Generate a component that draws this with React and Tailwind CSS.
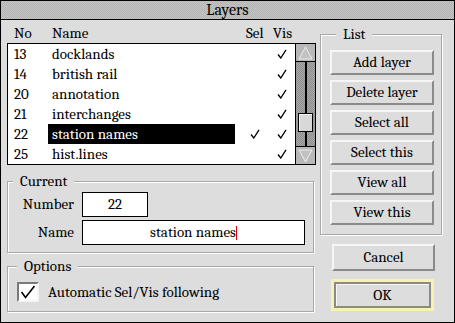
import React from 'react';

const rows = [
  { no: '13', name: 'docklands', sel: false, vis: true },
  { no: '14', name: 'british rail', sel: false, vis: true },
  { no: '20', name: 'annotation', sel: false, vis: true },
  { no: '21', name: 'interchanges', sel: false, vis: true },
  { no: '22', name: 'station names', sel: true, vis: true, current: true },
  { no: '25', name: 'hist.lines', sel: false, vis: true },
];

const buttons = ['Add layer', 'Delete layer', 'Select all', 'Select this', 'View all', 'View this'];

// etched group box, like the RISC OS ones
const groove = 'border border-[#a8a8a8] shadow-[inset_1px_1px_0_#fff,1px_1px_0_#fff]';

function Tick() {
  return (
    <svg width="10" height="10" viewBox="0 0 10 10" className="block">
      <path d="M1 5.5 L3.8 9 L9 0.8" fill="none" stroke="#000" strokeWidth="1.3" />
    </svg>
  );
}

function Arrow({ down }) {
  return (
    <svg width="17" height="16" viewBox="0 0 17 16" className="block mx-auto">
      <polygon
        points={down ? '2,2 15,2 8.5,14' : '2,14 15,14 8.5,2'}
        fill="#c2c2c2"
        stroke="#ececec"
        strokeWidth="1"
      />
    </svg>
  );
}

function ActionButton({ label }) {
  return (
    <div className="h-[25px] flex items-center justify-center bg-[#dddddd] border-2 border-t-[#f6f6f6] border-l-[#f6f6f6] border-b-[#8a8a8a] border-r-[#8a8a8a]">
      {label}
    </div>
  );
}

export default function App() {
  return (
    <div className="font-serif w-[455px] h-[323px] bg-[#dddddd] border border-black flex flex-col text-[15px] leading-[17px] text-black">
      {/* Title bar */}
      <div className="h-[19px] shrink-0 border-b border-black flex items-center justify-center text-[16px] bg-[repeating-conic-gradient(#c6c6c6_0_25%,#b2b2b2_0_50%)] bg-[length:2px_2px]">
        Layers
      </div>

      <div className="flex flex-1">
        {/* Left column */}
        <div className="w-[319px] pl-[6px] flex flex-col">
          <div className="h-[23px] w-[309px] flex items-end pb-[1px]">
            <span className="w-[45px] pl-[7px]">No</span>
            <span className="w-[194px]">Name</span>
            <span className="w-[27px]">Sel</span>
            <span>Vis</span>
          </div>

          <div className="w-[309px] h-[122px] border border-black flex">
            <div className="flex-1 bg-white overflow-hidden">
              {rows.map((r) => (
                <div key={r.no} className="h-[20px] flex items-center">
                  <span className="w-[40px] pl-[6px]">{r.no}</span>
                  <span
                    className={
                      'w-[187px] h-[20px] pl-[4px] flex items-center ' +
                      (r.current ? 'bg-black text-white' : '')
                    }
                  >
                    {r.name}
                  </span>
                  <span className="w-[27px] pl-[15px]">{r.sel && <Tick />}</span>
                  <span className="pl-[15px]">{r.vis && <Tick />}</span>
                </div>
              ))}
            </div>

            {/* Scroll bar */}
            <div className="w-[20px] border-l border-black flex flex-col">
              <div className="h-[18px] border-b border-black bg-[#b8b8b8] flex items-center">
                <Arrow />
              </div>
              <div className="flex-1 flex flex-col bg-[repeating-conic-gradient(#a8a8a8_0_25%,#8e8e8e_0_50%)] bg-[length:2px_2px]">
                <div className="h-[51px] w-[2px] mx-auto bg-black" />
                <div className="h-[19px] mx-[2px] border border-black bg-[#d8d8d8] shadow-[inset_1px_1px_0_#f2f2f2]" />
                <div className="flex-1 w-[2px] mx-auto bg-black" />
              </div>
              <div className="h-[18px] border-t border-black bg-[#b8b8b8] flex items-center">
                <Arrow down />
              </div>
            </div>
          </div>

          {/* Current */}
          <fieldset className={'mt-[8px] w-[307px] pt-[2px] pb-[7px] ' + groove}>
            <legend className="ml-[5px] px-[7px] bg-[#dddddd]">Current</legend>
            <div className="flex flex-col gap-[3px]">
              <div className="flex items-center">
                <span className="w-[66px] text-right">Number</span>
                <div className="ml-[8px] w-[66px] h-[25px] bg-white border border-black flex items-center justify-center">
                  22
                </div>
              </div>
              <div className="flex items-center">
                <span className="w-[66px] text-right">Name</span>
                <div className="ml-[8px] w-[223px] h-[25px] bg-white border border-black flex items-center justify-center">
                  station names
                  <span className="inline-block w-px h-[14px] bg-red-600" />
                </div>
              </div>
            </div>
          </fieldset>

          {/* Options */}
          <fieldset className={'mt-[5px] w-[307px] pt-[7px] pb-[9px] pl-[9px] ' + groove}>
            <legend className="ml-[0px] px-[7px] bg-[#dddddd]">Options</legend>
            <div className="flex items-center">
              <div className="w-[22px] h-[20px] bg-white border-2 border-t-[#7a7a7a] border-l-[#7a7a7a] border-b-[#f4f4f4] border-r-[#f4f4f4] flex items-center justify-center">
                <svg width="16" height="14" viewBox="0 0 16 14" className="block">
                  <path d="M1.5 7 L5.5 12.5 L14.5 1" fill="none" stroke="#000" strokeWidth="1.6" />
                </svg>
              </div>
              <span className="ml-[9px]">Automatic Sel/Vis following</span>
            </div>
          </fieldset>
        </div>

        {/* Right column */}
        <div className="flex flex-col">
          <fieldset className={'mt-[6px] w-[122px] pl-[9px] pr-[7px] pt-[7px] pb-[9px] ' + groove}>
            <legend className="ml-[6px] px-[7px] bg-[#dddddd]">List</legend>
            <div className="flex flex-col gap-[5px]">
              {buttons.map((b) => (
                <ActionButton key={b} label={b} />
              ))}
            </div>
          </fieldset>

          <div className="mt-[9px] ml-[12px] w-[103px] h-[27px] flex items-center justify-center border-2 border-t-[#f6f6f6] border-l-[#f6f6f6] border-b-[#8a8a8a] border-r-[#8a8a8a]">
            Cancel
          </div>
          <div className="mt-[8px] ml-[11px] w-[103px] h-[32px] border-[3px] border-[#f6f2b4] bg-[#dddddd]">
            <div className="h-full flex items-center justify-center border-2 border-t-[#8a8a8a] border-l-[#8a8a8a] border-b-[#8a8a8a] border-r-[#8a8a8a] shadow-[inset_1px_1px_0_#f6f6f6]">
              OK
            </div>
          </div>
        </div>
      </div>
    </div>
  );
}
